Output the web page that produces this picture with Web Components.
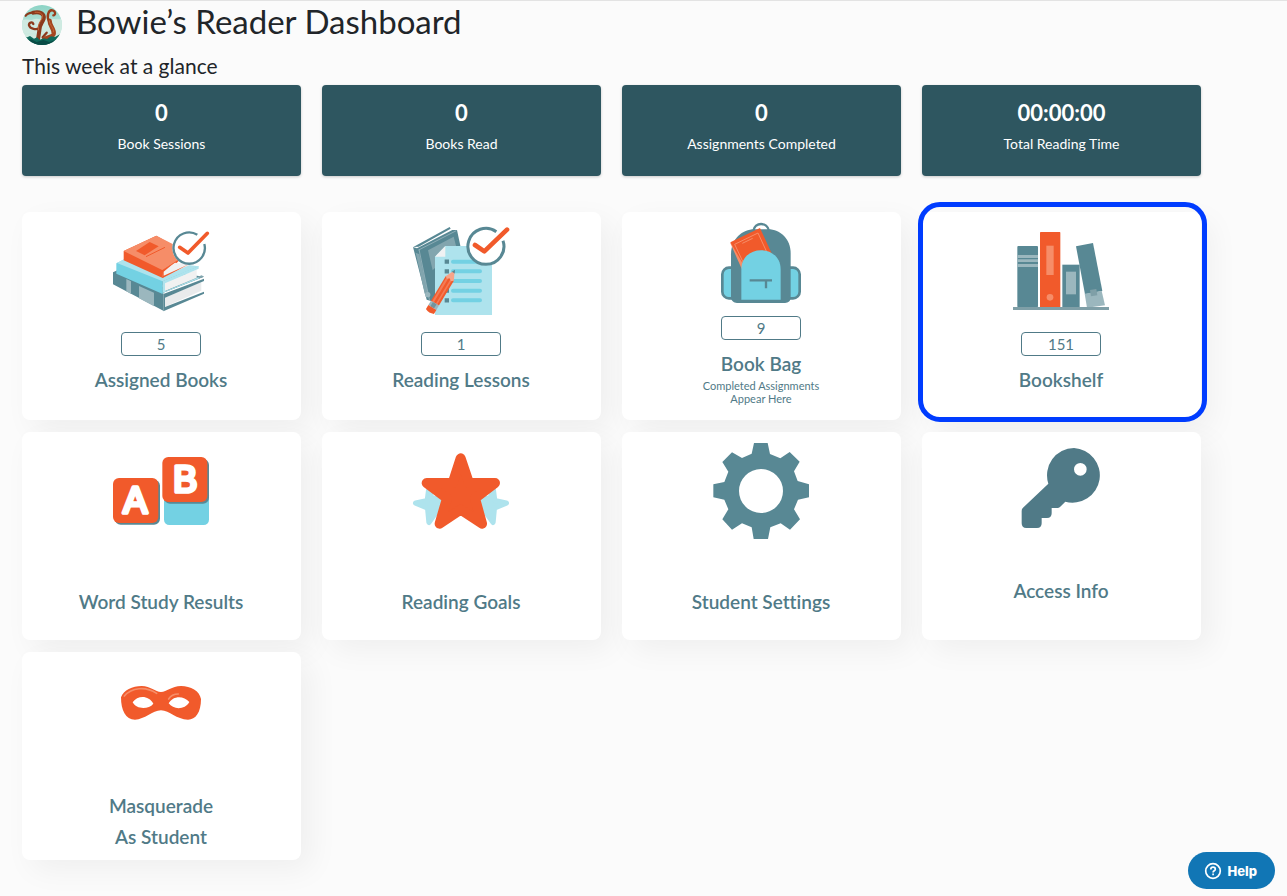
<!DOCTYPE html>
<html lang="en">
<head>
<meta charset="utf-8">
<meta name="viewport" content="width=device-width, initial-scale=1">
<title>Reader Dashboard</title>
<style>
  body { margin: 0; background: #fbfbfb; font-family: Lato, "Liberation Sans", sans-serif;
         font-variant-ligatures: none; color: #212529; }
</style>
</head>
<body>

<template id="art-kraken">
  <svg viewBox="66 15 120 120" width="40" height="40" aria-hidden="true">
    <defs>
      <clipPath id="disc"><circle cx="126" cy="75" r="60"/></clipPath>
      <linearGradient id="sky" x1="0" y1="0" x2="0" y2="1"><stop offset="0" stop-color="#8bd3c5"/><stop offset=".45" stop-color="#b5e2d8"/><stop offset="1" stop-color="#e2f0e6"/></linearGradient>
    </defs>
    <g clip-path="url(#disc)">
      <path fill="url(#sky)" d="M66 15h120v120H66z"/>
      <path fill="#cfeae1" d="M66 62c14-8 26 2 36-4s26 6 38 0 30 4 46-2v44H66z"/>
      <path fill="none" stroke="#8c3a1d" stroke-width="12" stroke-linecap="round" d="M100 38c20-5 34 4 31 18-3 12-14 18-13 36l-4 26"/>
      <path fill="none" stroke="#8c3a1d" stroke-width="7" stroke-linecap="round" d="M77 47c6-8 16-10 28-10M118 84c-8 6-28 4-31-8-1-9 10-12 13-4M128 112l12-14"/>
      <path fill="none" stroke="#a34620" stroke-width="13" stroke-linecap="round" d="M149 62c-1 16 15 24 12 40-3 11-17 7-29 16"/>
      <path fill="none" stroke="#983d1b" stroke-width="7" stroke-linecap="round" d="M148 66c-10-18-2-37 9-35 11 2 10 15 3 15"/>
      <path fill="none" stroke="#c56537" stroke-width="3" d="M104 37c20-2 28 8 21 20s-12 18-9 34M148 61c0 14 16 24 12 36"/>
      <path fill="#0f6a5b" d="M66 108l16 4 8-4 12 8 9-4 8 7 12-4 10 2 12-8 12 2 21-12v38H66z"/>
      <path fill="#094b46" d="M76 122l18-4 16 8 20-6 18 6 18-6-8 20H86z"/>
    </g>
  </svg>
</template>

<template id="art-books">
  <svg viewBox="39 27 288 288" width="96" height="96" aria-hidden="true">
    <path fill="#588894" d="M39 172l42-20 231 33-122 48v54L39 208z"/>
    <path fill="#9bb7be" d="M79 192l14 7v38l-14-8zM117 213l45 20v41l-45-24z"/>
    <path fill="#82a5ae" d="M50 171l68 20 72 35 122-41-7-4-114 44z"/>
    <path fill="#e9ebec" d="M194 248l110-47v26l-110 49z"/>
    <path fill="#588894" d="M190 237l122-46v7l-117 50v28l117-46v6l-122 53z"/>
    <path fill="#73d1e3" d="M49 145l28-14 220 24-109 43v39L49 176z"/>
    <path fill="#aee3ed" d="M51 144l26-14 220 24-109 45z"/>
    <path fill="#f1f1f1" d="M192 202l98-38v24l-95 40c-8-7-8-20-3-26z"/>
    <path fill="#aee3ed" d="M188 198l108-44v7l-101 44v24l101-42v4l-108 43z"/>
    <path fill="#f15a2b" d="M71 108l98-46 90 51-71 76L71 136z"/>
    <path fill="#f68d68" d="M71 108l98-46 98 50-79 54z"/>
    <path fill="#f15a2b" d="M108 108l41-27 27 13-42 27z"/>
    <path fill="none" stroke="#f15a2b" stroke-width="3" d="M138 125l57-28"/>
    <path fill="#f1f1f1" d="M189 166l36-23 46 6-83 36z"/>
    <path fill="#f15a2b" d="M186 166l39-24-34 28v12l79-36-82 43z"/>
    <circle cx="267" cy="99" r="50" fill="#fff"/>
    <path fill="none" stroke="#588894" stroke-width="7" d="M292 59a47 47 0 1 0 21 28"/>
    <path fill="none" stroke="#f15a2b" stroke-width="11" stroke-linecap="round" stroke-linejoin="round" d="M239 97l25 17 58-59"/>
  </svg>
</template>

<template id="art-lessons">
  <svg viewBox="39 27 288 288" width="96" height="96" aria-hidden="true">
    <path fill="#588894" d="M40 96l109-60 3 5-96 54zM39 96l12 4 106-55 14 0 32 150-100 66-23-7z"/>
    <path fill="#82a5ae" d="M47 113l11 5 28 128-12-10zM84 106l77-41 8 31-71 70z"/>
    <path fill="none" stroke="#a7c0c7" stroke-width="2" d="M56 105l113-58M57 103l32 155"/>
    <circle cx="83" cy="239" r="8" fill="#9bb7be"/>
    <path fill="#aee3ed" d="M136 93h140v207H105V125z"/>
    <path fill="#f0f2f3" d="M136 93v32h-31z"/>
    <path stroke="#73d1e3" stroke-width="12" stroke-linecap="round" d="M159 140h81M159 169h81M159 198h81M159 227h81M159 256h81"/>
    <path stroke="#588894" stroke-width="13" d="M134 140h13M134 169h13M134 198h13M134 227h13M134 256h13"/>
    <g transform="translate(164 166) rotate(31)">
      <path fill="#f15a2b" d="M-14 28h28v87h-28z"/>
      <path fill="#f47b55" d="M-10 28h6v87h-6zM3 28h5v87H3z"/>
      <path fill="#f7a489" d="M0 0l14 28-7 6-7-6-7 6-7-6z"/>
      <path fill="#588894" d="M0-2l5 10H-5z"/>
      <path fill="#9bb7be" d="M-14 115h28v15h-28z"/>
      <path fill="#73949d" d="M-7 115h13v15h-13z"/>
      <path fill="#f15a2b" d="M-14 130h28v14q-14 7-28 0z"/>
    </g>
    <circle cx="258" cy="95" r="56" fill="#fff"/>
    <path fill="none" stroke="#588894" stroke-width="9" d="M289 50a54 54 0 1 0 20 27"/>
    <path fill="none" stroke="#f15a2b" stroke-width="14" stroke-linecap="round" stroke-linejoin="round" d="M225 90l28 19 68-65"/>
  </svg>
</template>

<template id="art-bag">
  <svg viewBox="63 27 240 240" width="80" height="80" aria-hidden="true">
    <path fill="none" stroke="#588894" stroke-width="7" d="M160 48c4-28 42-28 47 0"/>
    <rect x="67" y="158" width="48" height="92" rx="20" fill="#73d1e3" stroke="#588894" stroke-width="8"/>
    <rect x="251" y="158" width="48" height="92" rx="20" fill="#73d1e3" stroke="#588894" stroke-width="8"/>
    <path fill="#588894" d="M93 118c0-46 34-75 70-75h41c38 0 68 30 68 72v132c0 11-7 17-17 17H111c-10 0-18-7-18-17z"/>
    <path fill="#f68d68" d="M91 85l8-4 47 99-21-19z"/>
    <path fill="#f15a2b" d="M91 82l89-43 46 100-78 40z"/>
    <path fill="none" stroke="#f68d68" stroke-width="3" d="M104 88l70-34 34 74M104 88l34 72M127 85l31-15"/>
    <path fill="#73d1e3" d="M124 164c0-78 118-78 118 0v90H124z"/>
    <path fill="none" stroke="#588894" stroke-width="7" d="M149 196h67M198 196v24"/>
  </svg>
</template>

<template id="art-shelf">
  <svg viewBox="39 27 288 288" width="96" height="96" aria-hidden="true">
    <rect x="52" y="93" width="62" height="184" rx="3" fill="#588894"/>
    <path fill="#9bb7be" d="M52 120h62v9H52zM52 133h62v8H52zM52 147h62v9H52z"/>
    <rect x="120" y="51" width="61" height="226" rx="2" fill="#f15a2b"/>
    <path fill="#f68d68" d="M139 92h22v88h-22z"/>
    <circle cx="150" cy="247" r="10" fill="#f68d68"/>
    <path fill="#588894" d="M187 149h52v128h-52z"/>
    <path fill="#9bb7be" d="M198 170h30v68h-30z"/>
    <path fill="#588894" d="M228 94l51-10 28 144-52 10z"/>
    <path fill="#9bb7be" d="M254 236l51-8 10 43-54 7z"/>
    <path fill="#7f9fa7" d="M270 225l19-3 3 19-19 3z"/>
    <path fill="#7f9fa7" d="M39 276h288v9H39z"/>
  </svg>
</template>

<template id="art-blocks">
  <svg viewBox="39 12 288 288" width="96" height="96" aria-hidden="true">
    <rect x="192" y="150" width="135" height="105" rx="16" fill="#73d1e3"/>
    <rect x="44" y="119" width="136" height="135" rx="18" fill="#588894"/>
    <rect x="192" y="57" width="135" height="134" rx="18" fill="#588894"/>
    <rect x="39" y="114" width="136" height="135" rx="18" fill="#f15a2b"/>
    <rect x="187" y="51" width="135" height="135" rx="18" fill="#f15a2b"/>
    <g fill="#fff" stroke="#fff" stroke-width="11" stroke-linejoin="round" font-family="Liberation Sans, sans-serif" font-size="108" text-anchor="middle">
      <text x="106" y="220">A</text>
      <text x="256" y="156">B</text>
    </g>
  </svg>
</template>

<template id="art-stars">
  <svg viewBox="39 12 288 288" width="96" height="96" aria-hidden="true">
    <g fill="#aee3ed" stroke="#aee3ed" stroke-width="16" stroke-linejoin="round">
      <path d="M86 150l10 25h40l-18 28-31 44-4-43-36-15 35-7z"/>
      <path d="M280 150l-10 25h-40l18 28 31 44 4-43 36-15-35-7z"/>
    </g>
    <path fill="#f15a2b" stroke="#f15a2b" stroke-width="30" stroke-linejoin="round" d="M182 55l25 74h78l-60 46 21 76-64-42-63 42 22-76-61-46h78z"/>
  </svg>
</template>

<template id="art-gear">
  <svg viewBox="39 27 288 288" width="96" height="96" aria-hidden="true">
    <path fill="#588894" fill-rule="evenodd" d="M162 24h41l7 33 31 13 28-19 30 29-17 29 11 29 34 10v39l-33 7-12 29 18 30-30 31-28-19-31 12-7 35h-43l-6-35-29-12-30 19-29-31 18-30-12-29-33-7v-39l33-7 12-31-18-29 29-29 30 17 29-13zM183 102a66 66 0 1 0 0 132 66 66 0 0 0 0-132z"/>
  </svg>
</template>

<template id="art-key">
  <svg viewBox="63 12 240 255" width="80" height="85" aria-hidden="true">
    <path fill="#507a87" fill-rule="evenodd" d="M222 24a82 82 0 1 1-26 161l-16 16q-3 3-8 3h-17v16q0 14-14 14h-16v16q0 14-14 14H79q-14 0-14-14v-37q0-6 4-10l76-72A82 82 0 0 1 222 24zM241 69a19 19 0 1 0 0 38 19 19 0 0 0 0-38z"/>
  </svg>
</template>

<template id="art-mask">
  <svg viewBox="63 -3 240 240" width="80" height="80" aria-hidden="true">
    <path fill="#f15a2b" fill-rule="evenodd" d="M63 97c8-22 34-34 62-34 27 0 41 18 58 18s32-18 60-18c29 0 56 15 60 39 0 40-16 62-39 62-35 0-55-28-81-28s-49 28-78 28c-28 0-42-28-42-67zM98 112c11 22 48 22 62 4-14-26-47-26-62-4zM206 115c14 20 49 20 62-4-17-20-49-20-62 4z"/>
    <path fill="none" stroke="#f68d68" stroke-width="5" stroke-linecap="round" d="M73 93c22-25 63-30 97-8M206 102c6-10 15-15 29-15"/>
  </svg>
</template>

<reader-dashboard>
  <reader-header slot="header">Bowie’s Reader Dashboard</reader-header>
  <span slot="summary">This week at a glance</span>

  <stat-tile slot="stats" value="0">Book Sessions</stat-tile>
  <stat-tile slot="stats" value="0">Books Read</stat-tile>
  <stat-tile slot="stats" value="0">Assignments Completed</stat-tile>
  <stat-tile slot="stats" value="00:00:00">Total Reading Time</stat-tile>

  <nav-card art="books" count="5">Assigned Books</nav-card>
  <nav-card art="lessons" count="1">Reading Lessons</nav-card>
  <nav-card art="bag" count="9">Book Bag<span slot="note">Completed Assignments<br>Appear Here</span></nav-card>
  <nav-card art="shelf" count="151" highlighted>Bookshelf</nav-card>
  <nav-card art="blocks">Word Study Results</nav-card>
  <nav-card art="stars">Reading Goals</nav-card>
  <nav-card art="gear">Student Settings</nav-card>
  <nav-card art="key">Access Info</nav-card>
  <nav-card art="mask">Masquerade<br>As Student</nav-card>
</reader-dashboard>
<help-button>Help</help-button>

<script>
  class ArtIcon extends HTMLElement {
    connectedCallback() {
      if (this.shadowRoot) return;
      const root = this.attachShadow({ mode: "open" });
      root.innerHTML = `<style>:host { display: block; } svg { display: block; overflow: visible; }</style>`;
      root.append(document.getElementById("art-" + this.getAttribute("name")).content.cloneNode(true));
    }
  }

  class ReaderHeader extends HTMLElement {
    constructor() {
      super();
      this.attachShadow({ mode: "open" }).innerHTML = `
        <style>
          :host { display: flex; gap: 14px; padding-top: 4px; }
          h1 { margin: 0; font-size: 33px; font-weight: 400; line-height: 32px; }
        </style>
        <art-icon name="kraken"></art-icon>
        <h1><slot></slot></h1>`;
    }
  }

  class ReaderDashboard extends HTMLElement {
    constructor() {
      super();
      this.attachShadow({ mode: "open" }).innerHTML = `
        <style>
          :host { display: block; border-top: 1px solid #e3e3e3; padding: 0 86px 36px 22px; }
          h2 { margin: 6px 0 4px; font-size: 21px; font-weight: 400; line-height: 30px; }
          section, nav { display: grid; grid-template-columns: repeat(4, 1fr); column-gap: 21px; row-gap: 12px; }
          nav { margin-top: 36px; }
        </style>
        <header><slot name="header"></slot></header>
        <main>
          <h2><slot name="summary"></slot></h2>
          <section><slot name="stats"></slot></section>
          <nav aria-label="Reader tools"><slot></slot></nav>
        </main>`;
    }
  }

  class StatTile extends HTMLElement {
    connectedCallback() {
      if (this.shadowRoot) return;
      this.attachShadow({ mode: "open" }).innerHTML = `
        <style>
          :host { display: block; padding: 12px 8px 17px; border-radius: 4px; background: #2e5660; color: #fff;
                  text-align: center; box-shadow: 0 1px 3px rgba(0, 0, 0, .2); }
          strong { display: block; font-size: 22px; font-weight: 700; line-height: 32px; }
          span { display: block; font-size: 14px; line-height: 30px; }
        </style>
        <strong>${this.getAttribute("value")}</strong>
        <span><slot></slot></span>`;
    }
  }

  class NavCard extends HTMLElement {
    connectedCallback() {
      if (this.shadowRoot) return;
      const count = this.getAttribute("count");
      this.attachShadow({ mode: "open" }).innerHTML = `
        <style>
          :host { display: block; position: relative; color: #507a87; }
          a { display: flex; flex-direction: column; align-items: center; box-sizing: border-box; min-height: 208px;
              height: 100%; padding: 12px 1px 0 0; border-radius: 8px; background: #fff; color: inherit;
              text-align: center; text-decoration: none; box-shadow: 10px 10px 30px rgba(0, 0, 0, .05); }
          .count { box-sizing: border-box; width: 80px; margin-top: 12px; border: 1px solid #507a87;
                   border-radius: 4px; font-size: 15px; line-height: 22px; }
          .title { margin-top: 46px; font-size: 19px; font-weight: 600; line-height: 31px; }
          .count + .title { margin-top: 8px; }
          .note { font-size: 11px; line-height: 13px; }
          :host([highlighted])::after { content: ""; position: absolute; inset: -10px -6px -2px -4px;
                   border: 5px solid #003cff; border-radius: 22px; pointer-events: none; }
        </style>
        <a href="#${this.getAttribute("art")}">
          <art-icon name="${this.getAttribute("art")}"></art-icon>
          ${count ? `<span class="count">${count}</span>` : ""}
          <span class="title"><slot></slot></span>
          <span class="note"><slot name="note"></slot></span>
        </a>`;
    }
  }

  class HelpButton extends HTMLElement {
    constructor() {
      super();
      this.attachShadow({ mode: "open" }).innerHTML = `
        <style>
          :host { display: block; position: fixed; right: 12px; bottom: 7px; }
          button { display: flex; align-items: center; gap: 5px; height: 37px; padding: 0 18px 0 16px; border: 0;
                   border-radius: 19px; background: #1176b5; color: #fff;
                   font: 800 13px/20px Inter, "Liberation Sans", sans-serif; cursor: pointer; }
        </style>
        <button type="button">
          <svg width="18" height="18" viewBox="0 0 18 18" fill="none" stroke="#fff" stroke-width="1.7" aria-hidden="true">
            <circle cx="9" cy="9" r="7.3"/><path d="M6.8 7.4c0-3 4.5-2.8 4.5-.2 0 1.7-2.2 1.5-2.2 3.2M9.1 11.6v1.6"/>
          </svg>
          <slot></slot>
        </button>`;
    }
  }

  customElements.define("art-icon", ArtIcon);
  customElements.define("reader-header", ReaderHeader);
  customElements.define("reader-dashboard", ReaderDashboard);
  customElements.define("stat-tile", StatTile);
  customElements.define("nav-card", NavCard);
  customElements.define("help-button", HelpButton);
</script>
</body>
</html>
